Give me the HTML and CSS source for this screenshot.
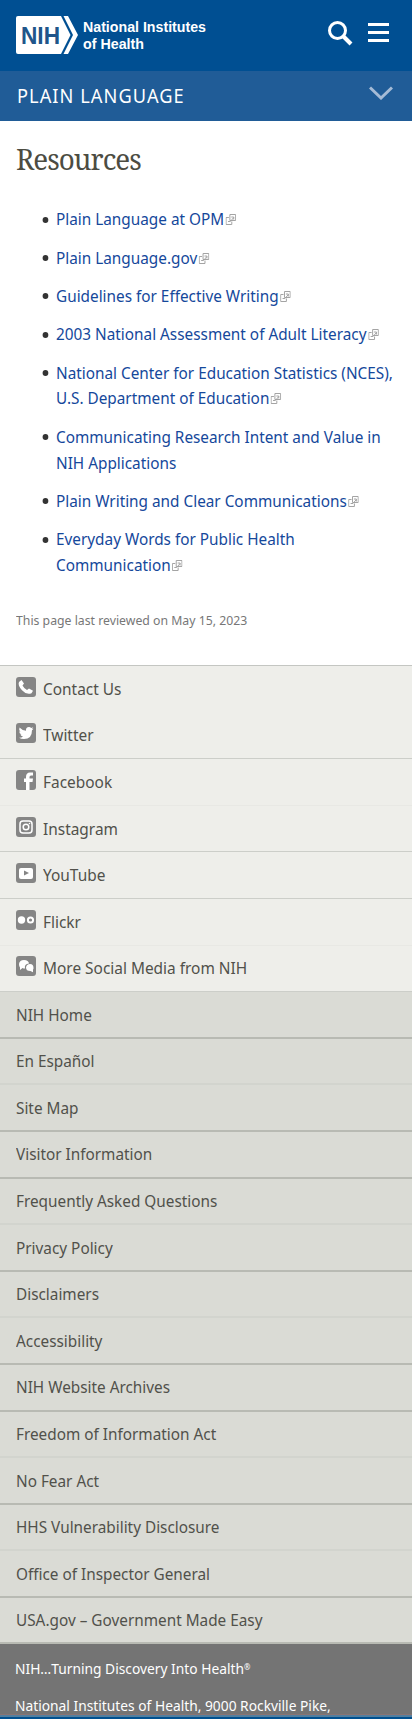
FILE: index.html
```html
<!DOCTYPE html>
<html lang="en">
<head>
<meta charset="utf-8">
<title>Resources | National Institutes of Health</title>
<link rel="stylesheet" href="styles.css">
</head>
<body>
<svg class="defs" width="0" height="0">
  <symbol id="ext" viewBox="0 0 11 11"><path d="M3.5 3.5H.5v7h6v-3M4.5.5h6v6h-6zM2.500 7.500h2.500l3.500-4M6 3h2.500v2.500" fill="none" stroke="#a2a2a2"/></symbol>
</svg>
<header class="top">
  <a class="logo">
    <svg width="62" height="38" viewBox="0 0 62 38"><path d="M2 0h43l9.500 19L45 38H2q-2 0-2-2V2q0-2 2-2z" fill="#fff"/><path d="M47.500 0H52l10 19-10 19h-4.500l9.500-19z" fill="#fff"/><text class="logo-mark" x="5" y="27.700" textLength="39" lengthAdjust="spacingAndGlyphs">NIH</text></svg>
    <svg width="130" height="38"><g class="logo-name"><text x="0" y="16" textLength="123" lengthAdjust="spacingAndGlyphs">National Institutes</text><text x="0" y="33" textLength="61" lengthAdjust="spacingAndGlyphs">of Health</text></g></svg>
  </a>
  <div class="tools">
    <svg width="26" height="26" fill="none" stroke="#fff"><circle cx="9.500" cy="9.500" r="8" stroke-width="3"/><path d="M15 15l8 8" stroke-width="4"/></svg>
    <svg class="bars" width="22" height="20" fill="#fff"><path d="M0 0h21v3H0zM0 8h21v3H0zM0 16h21v3H0z"/></svg>
  </div>
</header>
<div class="section-bar"><span class="t">PLAIN LANGUAGE</span>
  <svg width="24" height="14" fill="none" stroke="#a5bbd6" stroke-width="3"><path d="M1 1.500l11 10.500 11-10.500"/></svg>
</div>
<main>
  <h1>Resources</h1>
  <ul class="links">
    <li><a>Plain Language at OPM</a><svg class="ext"><use href="#ext"/></svg></li>
    <li><a>Plain Language.gov</a><svg class="ext"><use href="#ext"/></svg></li>
    <li><a>Guidelines for Effective Writing</a><svg class="ext"><use href="#ext"/></svg></li>
    <li><a>2003 National Assessment of Adult Literacy</a><svg class="ext"><use href="#ext"/></svg></li>
    <li><a>National Center for Education Statistics (NCES),<br>U.S. Department of Education</a><svg class="ext"><use href="#ext"/></svg></li>
    <li><a>Communicating Research Intent and Value in<br>NIH Applications</a></li>
    <li><a>Plain Writing and Clear Communications</a><svg class="ext"><use href="#ext"/></svg></li>
    <li><a>Everyday Words for Public Health<br>Communication</a><svg class="ext"><use href="#ext"/></svg></li>
  </ul>
  <p class="reviewed">This page last reviewed on May 15, 2023</p>
</main>
<nav class="menu social">
  <a class="plain"><svg class="ico"><rect width="20" height="20" rx="3"/><path class="w" d="M3 5l2.500-2 2.500 3.500-1.500 2q1.500 3 4.500 4.500l2-1.500 4 2.300-1.500 2.500q-5 2-9.500-3T3 5z"/></svg><span class="t">Contact Us</span></a>
  <a><svg class="ico"><rect width="20" height="20" rx="3"/><path class="w" d="M3.500 4.500q2.700 3 6.500 3.200Q9.700 4 13 4q1.300 0 2.200 1l2-.8-1.200 1.900 1.500-.4-1.500 1.500Q16 16 8 16q-3 0-5-1.300 2.600.1 4-1.200-2.200-.4-2.700-2h1.200Q3.200 10.500 3.200 8.300l1.300.4Q2.500 6.800 3.500 4.500z"/></svg><span class="t">Twitter</span></a>
  <a class="faint"><svg class="ico"><rect width="20" height="20" rx="3"/><path class="w" d="M10 20v-8H8V8.500h2V7q0-4.500 4-4.500h3v3h-2q-1.500 0-1.500 1.500v1.500H17l-.5 3.500h-3v8z"/></svg><span class="t">Facebook</span></a>
  <a><svg class="ico"><rect width="20" height="20" rx="3"/><rect x="4" y="4" width="12" height="12" rx="3" fill="none" stroke="#fff" stroke-width="1.500"/><circle cx="10" cy="10" r="2.800" fill="none" stroke="#fff" stroke-width="1.500"/><circle class="w" cx="13.500" cy="6.500" r=".8"/></svg><span class="t">Instagram</span></a>
  <a><svg class="ico"><rect width="20" height="20" rx="3"/><rect class="w" x="3" y="5" width="14" height="11" rx="2"/><path d="M8 7.500v5l5-2.500z"/></svg><span class="t">YouTube</span></a>
  <a class="faint"><svg class="ico"><rect width="20" height="20" rx="3"/><circle class="w" cx="5.500" cy="10" r="3.700"/><circle cx="14.500" cy="10" r="2.600" fill="none" stroke="#fff" stroke-width="2"/></svg><span class="t">Flickr</span></a>
  <a><svg class="ico"><rect width="20" height="20" rx="3"/><path class="w" d="M3 8q.5-4 5-4t5 3.500q-5 .5-4 5-1.500 0-2.500-.5L4 14v-2.500Q3 10 3 8z"/><path class="w" d="M10 11.500Q10.500 8 14 8t3.500 4q0 1-.5 1.500v2.800L14.500 15Q10 15 10 11.500z"/></svg><span class="t">More Social Media from NIH</span></a>
</nav>
<nav class="menu site">
  <a><span class="t">NIH Home</span></a>
  <a class="faint"><span class="t">En Español</span></a>
  <a><span class="t">Site Map</span></a>
  <a><span class="t">Visitor Information</span></a>
  <a class="faint"><span class="t">Frequently Asked Questions</span></a>
  <a><span class="t">Privacy Policy</span></a>
  <a class="faint"><span class="t">Disclaimers</span></a>
  <a><span class="t">Accessibility</span></a>
  <a><span class="t">NIH Website Archives</span></a>
  <a class="faint"><span class="t">Freedom of Information Act</span></a>
  <a><span class="t">No Fear Act</span></a>
  <a class="faint"><span class="t">HHS Vulnerability Disclosure</span></a>
  <a><span class="t">Office of Inspector General</span></a>
  <a><span class="t">USA.gov – Government Made Easy</span></a>
</nav>
<footer>
  <p>NIH…Turning Discovery Into Health<span class="reg">®</span></p>
  <p>National Institutes of Health, 9000 Rockville Pike,</p>
  <div class="edge"></div>
</footer>
</body>
</html>
```
FILE: styles.css
```css
* { box-sizing: border-box; }
body { margin: 0; height: 1719px; overflow: hidden; background: #fff; color: #444; font-family: "Noto Sans", sans-serif; font-size: 16px; }
.defs { display: block; height: 0; }
.t, .links li, h1, .reviewed, footer p { transform: scaleX(.958); transform-origin: 0 50%; }
.t { display: block; white-space: nowrap; }
.top { height: 71px; background: #004f92; display: flex; justify-content: space-between; padding: 16px 22px 0 16px; }
.logo { display: flex; gap: 5px; }
.logo svg { overflow: visible; }
.logo-mark { font: bold 23px "Liberation Sans", sans-serif; fill: #20558a; }
.logo-name { font: bold 14.500px "Liberation Sans", sans-serif; fill: #fff; }
.tools { display: flex; gap: 14px; padding-top: 5px; }
.bars { margin-top: 2px; }
.section-bar { height: 50px; background: #205c97; color: #fff; display: flex; justify-content: space-between; padding: 14px 19px 0 17px; font-size: 19px; line-height: 24px; letter-spacing: 1.100px; }
.section-bar .t { margin-top: -1px; }
.section-bar svg { margin-top: 1px; }
main { height: 544px; padding: 17px 16px 0; }
h1 { margin: 0; font: 29px/42px "Noto Serif", "Liberation Serif", serif; letter-spacing: -1px; color: #4c4c42; }
.links { margin: 27.400px 0 0; padding: 0 0 0 40px; line-height: 25.900px; list-style: none; }
.links li { margin-bottom: 12.400px; white-space: nowrap; }
.links li::before { content: ""; display: inline-block; width: 6px; height: 6px; margin: 0 8.300px 0 -14.300px; border-radius: 50%; background: #333; vertical-align: 2.500px; }
.links a { color: #15489b; }
.ext { width: 11px; height: 11px; margin-left: 1.500px; vertical-align: 0; }
.reviewed { margin: 31.600px 0 0; font-size: 12.800px; line-height: 18px; color: #777; }
.menu a { display: flex; align-items: center; height: 46.600px; padding: 0 16px; border-bottom: 2px solid #b8bab3; color: #51514b; }
.menu.social { background: #eeeeea; border-top: 1px solid #c4c6c2; }
.menu.social a { border-bottom: 1px solid #cccec9; }
.menu.social a.plain { border-color: #eeeeea; }
.menu.social a.faint { border-color: #e8e8e4; }
.menu.social .t { transform: scaleX(.964); }
.menu.site { background: #dadbd5; }
.menu.site a { padding-top: .5px; }
.menu.site a.faint { border-color: #d2d4ce; }
.ico { width: 20px; height: 20px; margin-right: 7.400px; fill: #858585; position: relative; top: -2px; }
.w { fill: #fff; }
footer { height: 75px; background: #747474; color: #fff; padding: 15px 15px 0; font-size: 14.400px; line-height: 20px; position: relative; }
footer p { margin: 0 0 17px; white-space: nowrap; }
.reg { font-size: 8px; line-height: 0; vertical-align: 4px; }
.edge { position: absolute; left: 0; right: 0; bottom: 0; height: 5px; background: #537f9f; border-top: 1px solid #8a7472; border-bottom: 2px solid #00508f; }
```
